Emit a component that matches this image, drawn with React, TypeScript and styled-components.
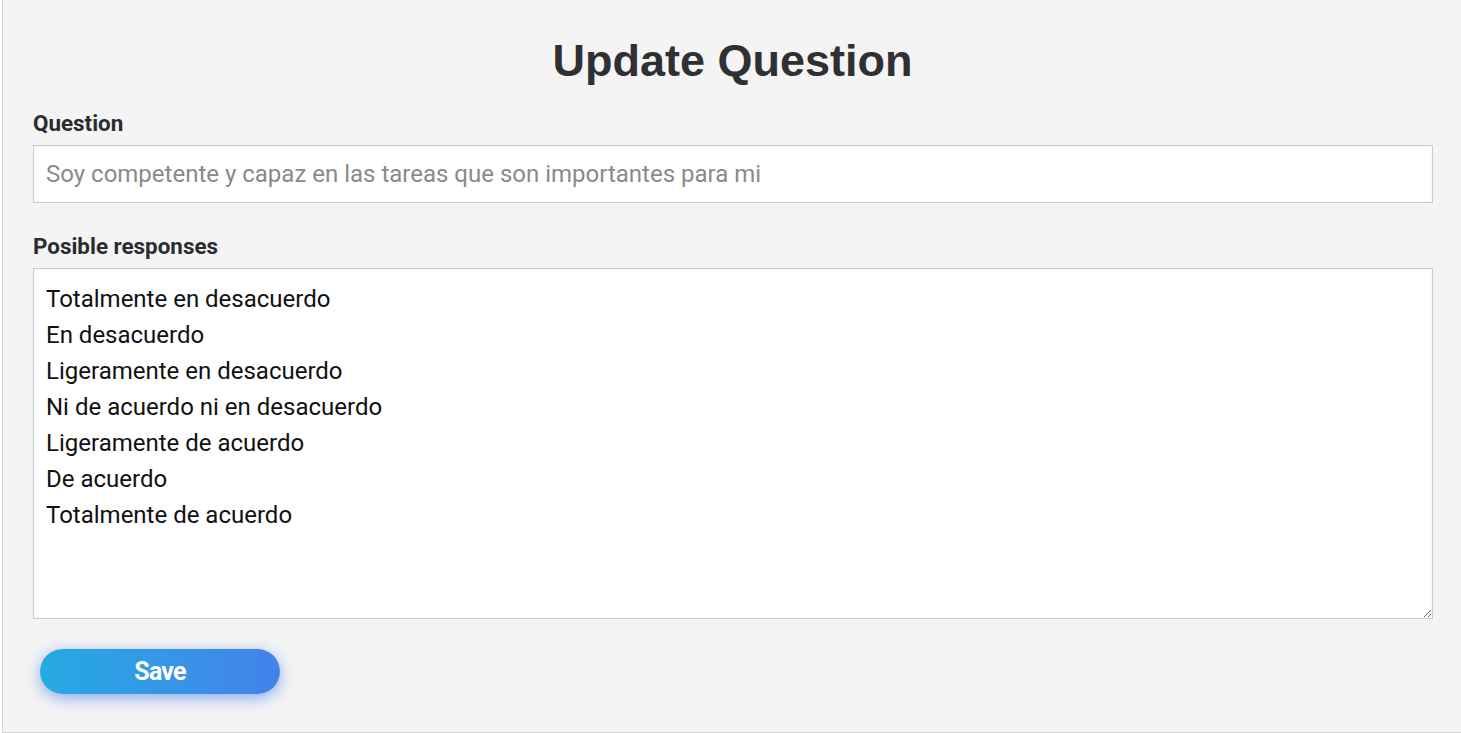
import React from "react";
import styled, { createGlobalStyle } from "styled-components";

const GlobalStyle = createGlobalStyle`
  html, body {
    margin: 0;
    padding: 0;
    background: #ffffff;
    overflow: hidden;
  }
  * { box-sizing: border-box; }
`;

const Card = styled.div`
  margin-left: 2px;
  width: 1462px;
  height: 733px;
  background: #f4f4f4;
  border-left: 1px solid #cfd3d4;
  border-bottom: 1px solid #cfd3d4;
  padding: 0 30px;
  display: flex;
  flex-direction: column;
`;

const Title = styled.h1`
  margin: 0;
  padding-top: 35px;
  padding-right: 2px;
  font-family: "Liberation Sans", Arial, sans-serif;
  font-weight: 700;
  font-size: 45px;
  line-height: 52px;
  color: #2f3033;
  text-align: center;
`;

const Field = styled.div<{ $top: number }>`
  display: flex;
  flex-direction: column;
  margin-top: ${(p) => p.$top}px;
`;

const Label = styled.label`
  font-family: Roboto, "Noto Sans", sans-serif;
  font-weight: 700;
  font-size: 22.4px;
  line-height: 24px;
  color: #2b2c2f;
  letter-spacing: 0;
  margin-bottom: 10px;
`;

const TextInput = styled.input`
  width: 1400px;
  height: 58px;
  border: 1px solid #cccccc;
  background: #ffffff;
  box-shadow: inset 0 1px 3px rgba(0, 0, 0, 0.06);
  padding: 0 12px;
  font-family: Roboto, "Noto Sans", sans-serif;
  font-size: 24px;
  color: #222;
  outline: none;
  &::placeholder {
    color: #8a8a8a;
  }
`;

const TextArea = styled.textarea`
  width: 1400px;
  height: 351px;
  border: 1px solid #cccccc;
  background: #ffffff;
  box-shadow: inset 0 1px 3px rgba(0, 0, 0, 0.06);
  padding: 12px 12px;
  font-family: Roboto, "Noto Sans", sans-serif;
  font-size: 24px;
  line-height: 36px;
  color: #111111;
  outline: none;
  resize: both;
  display: block;
`;

const SaveButton = styled.button`
  margin-top: 30px;
  margin-left: 7px;
  width: 240px;
  height: 45px;
  border: none;
  border-radius: 23px;
  background: linear-gradient(90deg, #25aae1 0%, #3597e6 50%, #4481eb 100%);
  box-shadow: 0 4px 15px rgba(65, 120, 235, 0.6);
  color: #ffffff;
  font-family: Roboto, "Noto Sans", sans-serif;
  font-weight: 700;
  font-size: 25px;
  letter-spacing: -0.8px;
  cursor: pointer;
`;

const responses = [
  "Totalmente en desacuerdo",
  "En desacuerdo",
  "Ligeramente en desacuerdo",
  "Ni de acuerdo ni en desacuerdo",
  "Ligeramente de acuerdo",
  "De acuerdo",
  "Totalmente de acuerdo",
].join("\n");

export default function App() {
  return (
    <>
      <GlobalStyle />
      <Card>
        <Title>Update Question</Title>
        <Field $top={24}>
          <Label>Question</Label>
          <TextInput placeholder="Soy competente y capaz en las tareas que son importantes para mi" />
        </Field>
        <Field $top={31}>
          <Label>Posible responses</Label>
          <TextArea defaultValue={responses} />
        </Field>
        <div>
          <SaveButton>Save</SaveButton>
        </div>
      </Card>
    </>
  );
}
